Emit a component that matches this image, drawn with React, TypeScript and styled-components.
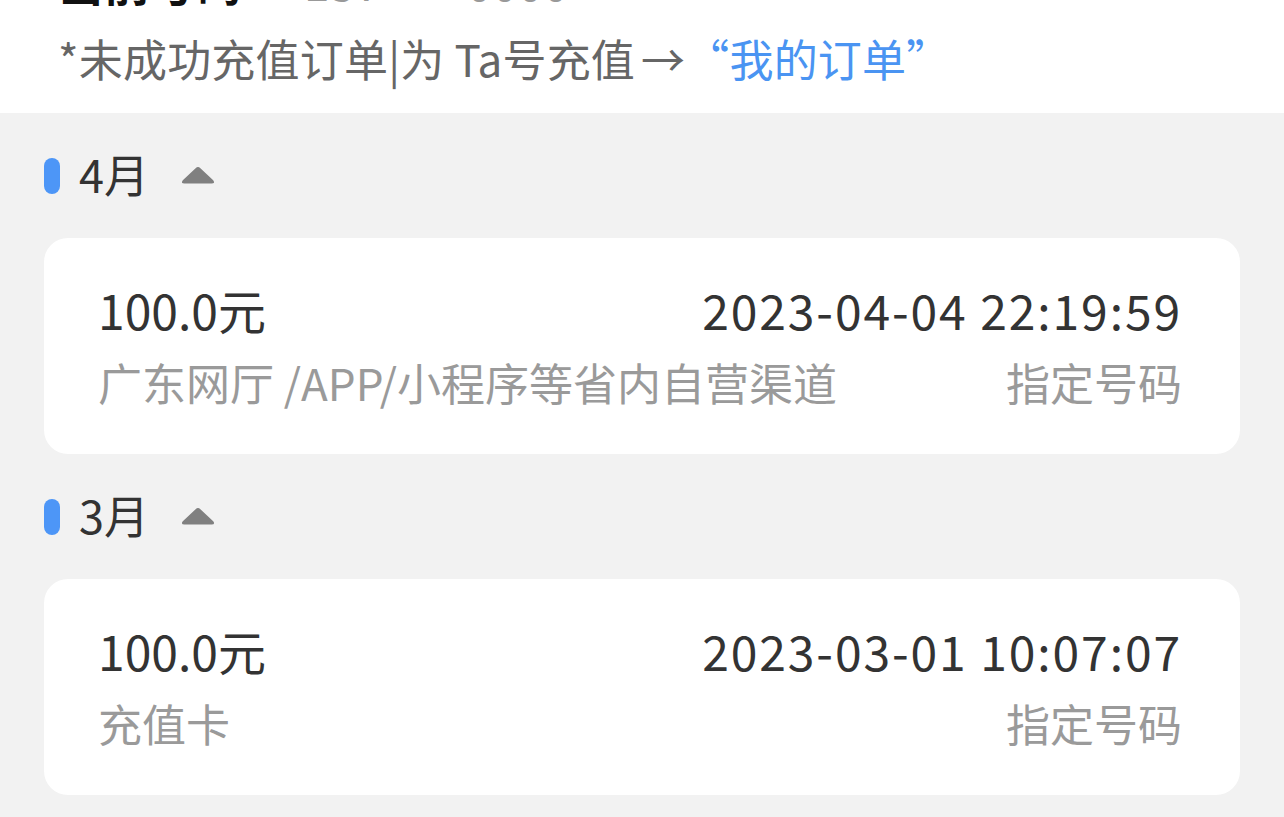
import React from "react";
import styled, { createGlobalStyle } from "styled-components";

const GlobalStyle = createGlobalStyle`
  html, body {
    margin: 0;
    padding: 0;
    background: #f2f2f2;
    font-family: "Noto Sans CJK SC", "Noto Sans", sans-serif;
    overflow: hidden;
  }
`;

const Page = styled.div`
  width: 1284px;
  height: 817px;
  overflow: hidden;
  background: #f2f2f2;
`;

const Header = styled.header`
  height: 113px;
  box-sizing: border-box;
  background: #ffffff;
  padding: 0 0 0 58px;
  overflow: hidden;
`;

const TopLine = styled.div`
  margin-top: -42px;
  font-size: 46px;
  line-height: 46px;
  font-weight: 700;
  color: #111;
  white-space: nowrap;
`;

const TopNumber = styled.span`
  font-weight: 400;
  color: #999;
  margin-left: 62px;
`;

const Subtitle = styled.div`
  margin-top: 32px;
  font-size: 44px;
  line-height: 44px;
  color: #666;
  white-space: nowrap;
  letter-spacing: 0.2px;
`;

const Arrow = styled.span`
  margin-left: 6px;
`;

const Link = styled.span`
  color: #4a94f2;
`;

const MonthHeader = styled.div`
  height: 125px;
  box-sizing: border-box;
  padding: 0 0 4px 44px;
  display: flex;
  align-items: center;
`;

const MonthBar = styled.span`
  width: 16px;
  height: 36px;
  border-radius: 8px;
  background: #4d96f7;
  margin-right: 19px;
  margin-top: 4px;
`;

const MonthText = styled.span`
  font-size: 45px;
  line-height: 50px;
  color: #333;
`;

const Caret = styled.svg`
  margin-left: 31px;
  margin-top: 2px;
  width: 36px;
  height: 20px;
`;

const Card = styled.div`
  margin: 0 44px;
  height: 216px;
  box-sizing: border-box;
  background: #ffffff;
  border-radius: 24px;
  padding: 45px 58px 0 54px;
  display: flex;
  flex-direction: column;
  gap: 21px;
`;

const Row = styled.div`
  display: flex;
  justify-content: space-between;
  align-items: center;
  height: 52px;
  white-space: nowrap;
`;

const Primary = styled.span<{ $wide?: boolean }>`
  font-size: 48px;
  line-height: 52px;
  color: #333;
  letter-spacing: ${(p) => (p.$wide ? "1.9px" : "0")};
`;

const Secondary = styled.span`
  font-size: 44px;
  line-height: 52px;
  color: #9a9a9a;
`;

type Order = {
  month: string;
  amount: string;
  time: string;
  channel: string;
  target: string;
};

const orders: Order[] = [
  {
    month: "4月",
    amount: "100.0元",
    time: "2023-04-04 22:19:59",
    channel: "广东网厅 /APP/小程序等省内自营渠道",
    target: "指定号码",
  },
  {
    month: "3月",
    amount: "100.0元",
    time: "2023-03-01 10:07:07",
    channel: "充值卡",
    target: "指定号码",
  },
];

function CaretIcon() {
  return (
    <Caret viewBox="0 0 36 20">
      <path
        d="M15.6 3.2 Q18 0.6 20.4 3.2 L33.2 15.2 Q35.6 18.4 31.6 18.6 L4.4 18.6 Q0.4 18.4 2.8 15.2 Z"
        fill="#808080"
      />
    </Caret>
  );
}

export default function App() {
  return (
    <Page>
      <GlobalStyle />
      <Header>
        <TopLine>
          当前号码<TopNumber>137****0000</TopNumber>
        </TopLine>
        <Subtitle>
          *未成功充值订单|为 Ta号充值<Arrow>→</Arrow>
          <Link>“我的订单”</Link>
        </Subtitle>
      </Header>
      {orders.map((o) => (
        <section key={o.month}>
          <MonthHeader>
            <MonthBar />
            <MonthText>{o.month}</MonthText>
            <CaretIcon />
          </MonthHeader>
          <Card>
            <Row>
              <Primary>{o.amount}</Primary>
              <Primary $wide>{o.time}</Primary>
            </Row>
            <Row>
              <Secondary>{o.channel}</Secondary>
              <Secondary>{o.target}</Secondary>
            </Row>
          </Card>
        </section>
      ))}
    </Page>
  );
}
